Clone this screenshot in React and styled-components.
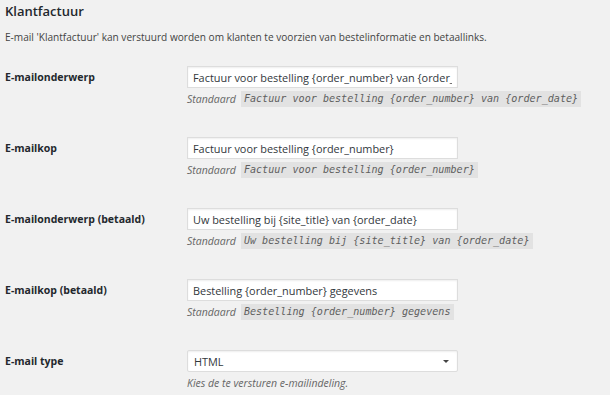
import styled, { createGlobalStyle } from "styled-components";

const GlobalStyle = createGlobalStyle`
  html, body {
    margin: 0;
    padding: 0;
    background: #f1f1f1;
  }
  body {
    font-family: "Open Sans", "Liberation Sans", sans-serif;
    color: #23282d;
  }
`

const Page = styled.div`
  padding: 1px 5px 0 5px;
  width: 610px;
  height: 395px;
  box-sizing: border-box;
  overflow: hidden;
`

const Title = styled.h2`
  font-size: 13px;
  line-height: 20px;
  font-weight: 600;
  margin: 0;
  color: #23282d;
`

const Intro = styled.p`
  font-size: 10.1px;
  line-height: 14px;
  margin: 9px 0 7px;
  color: #444;
`

const Row = styled.div`
  display: grid;
  grid-template-columns: 182px 1fr;
  padding: 15px 0;
`

const Label = styled.div`
  font-size: 10.5px;
  font-weight: 700;
  line-height: 22px;
  color: #23282d;
`

const Field = styled.div`
  display: flex;
  flex-direction: column;
  gap: 3px;
`

const TextInput = styled.input`
  width: 271px;
  height: 22px;
  box-sizing: border-box;
  border: 1px solid #ddd;
  box-shadow: inset 0 1px 2px rgba(0, 0, 0, 0.07);
  background: #fff;
  padding: 0 5px;
  margin: 0;
  font-family: "Open Sans", "Liberation Sans", sans-serif;
  font-size: 10.9px;
  color: #32373c;
  outline: none;
`

const Hint = styled.div`
  display: flex;
  align-items: center;
  gap: 5px;
  height: 16px;
  font-size: 10.5px;
  font-style: italic;
  color: #666;
`

const Code = styled.code`
  background: #e2e2e2;
  padding: 0 3px;
  line-height: 16px;
  font-family: "DejaVu Sans Mono", "Liberation Mono", monospace;
  font-size: 10.1px;
  font-style: italic;
  color: #5f5f5f;
`

const SelectBox = styled.div`
  width: 271px;
  height: 22px;
  box-sizing: border-box;
  border: 1px solid #ddd;
  border-radius: 2px;
  box-shadow: inset 0 1px 2px rgba(0, 0, 0, 0.07);
  background: #fff;
  padding: 0 8px 0 6px;
  display: flex;
  align-items: center;
  justify-content: space-between;
  font-size: 10.9px;
  color: #32373c;
`

const Arrow = styled.span`
  width: 0;
  height: 0;
  border-left: 3px solid transparent;
  border-right: 3px solid transparent;
  border-top: 3px solid #444;
  margin-top: 1px;
`

const rows = [
  {
    label: "E-mailonderwerp",
    value: "Factuur voor bestelling {order_number} van {order_date}",
    standard: "Factuur voor bestelling {order_number} van {order_date}",
  },
  {
    label: "E-mailkop",
    value: "Factuur voor bestelling {order_number}",
    standard: "Factuur voor bestelling {order_number}",
  },
  {
    label: "E-mailonderwerp (betaald)",
    value: "Uw bestelling bij {site_title} van {order_date}",
    standard: "Uw bestelling bij {site_title} van {order_date}",
  },
  {
    label: "E-mailkop (betaald)",
    value: "Bestelling {order_number} gegevens",
    standard: "Bestelling {order_number} gegevens",
  },
]

const TextRow = ({ label, value, standard }) => (
  <Row>
    <Label>{label}</Label>
    <Field>
      <TextInput type="text" defaultValue={value} readOnly />
      <Hint>
        Standaard <Code>{standard}</Code>
      </Hint>
    </Field>
  </Row>
)

const App = () => {
  return (
    <>
      <GlobalStyle />
      <Page>
        <Title>Klantfactuur</Title>
        <Intro>
          E-mail 'Klantfactuur' kan verstuurd worden om klanten te voorzien van bestelinformatie en betaallinks.
        </Intro>
        {rows.map((row) => (
          <TextRow key={row.label} {...row} />
        ))}
        <Row>
          <Label>E-mail type</Label>
          <Field>
            <SelectBox>
              HTML
              <Arrow />
            </SelectBox>
            <Hint>Kies de te versturen e-mailindeling.</Hint>
          </Field>
        </Row>
      </Page>
    </>
  )
}

export default App;
